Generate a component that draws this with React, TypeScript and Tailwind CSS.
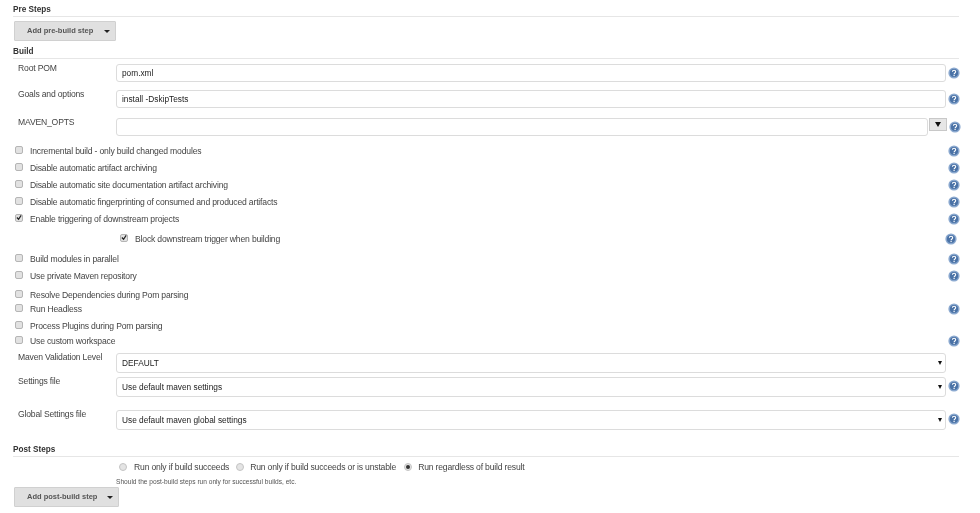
const labelText = 'text-[8.6px] tracking-[-0.18px] leading-none text-[#444]';

function HelpIcon() {
    return (
        <svg width="12" height="12" viewBox="0 0 12 12" className="shrink-0">
            <circle cx="6" cy="6" r="5.6" fill="#8aa8cf" />
            <circle cx="6" cy="6" r="4.1" fill="#4a72a6" />
            <path d="M4.4 4.8c0-2 3.3-2 3.3 0 0 1.2-1.6 1.2-1.6 2.4" fill="none" stroke="#fff" strokeWidth="1.1" />
            <rect x="5.5" y="7.9" width="1.2" height="1.2" fill="#fff" />
        </svg>
    );
}

function Checkbox({ checked }: { checked?: boolean }) {
    return (
        <span className="mb-[2px] flex h-[8px] w-[8px] shrink-0 items-center justify-center rounded-[2px] border border-[#b5b5b5] bg-[#e2e2e2]">
            {checked && (
                <svg width="7" height="7" viewBox="0 0 7 7">
                    <path d="M1 3.5 L3 5.5 L6 1" fill="none" stroke="#222" strokeWidth="1.4" />
                </svg>
            )}
        </span>
    );
}

function Radio({ checked }: { checked?: boolean }) {
    return (
        <span className="mb-[2px] flex h-[8px] w-[8px] shrink-0 items-center justify-center rounded-full border border-[#c4c4c4] bg-[#e4e4e4]">
            {checked && <span className="h-[4px] w-[4px] rounded-full bg-[#333]" />}
        </span>
    );
}

function Section({ title, height }: { title: string; height: string }) {
    return (
        <div className={`flex items-end border-b border-[#e6e6e6] pb-[2px] text-[8.2px] leading-none font-bold text-[#333] ${height}`}>
            {title}
        </div>
    );
}

function StepButton({ label, width }: { label: string; width: string }) {
    return (
        <div className={`ml-px flex h-[20px] items-center rounded-[1px] border border-[#d0d0d0] bg-[#e0e0e0] pl-[12px] text-[7.5px] font-bold whitespace-nowrap text-[#555] ${width}`}>
            <span className="flex-1">{label}</span>
            <span className="mr-[5px] h-0 w-0 border-x-[3px] border-t-[3px] border-x-transparent border-t-[#222]" />
        </div>
    );
}

function CheckRow({ label, height, checked, help = true, indent }: { label: string; height: string; checked?: boolean; help?: boolean; indent?: boolean }) {
    return (
        <div className={`flex items-center ${height}`}>
            <div className={indent ? 'w-[107px] shrink-0' : 'w-[2px] shrink-0'} />
            <Checkbox checked={checked} />
            <span className={`ml-[7px] flex-1 pt-[2px] ${labelText}`}>{label}</span>
            {help && (
                <div className={indent ? 'mr-[2px]' : '-mr-px'}>
                    <HelpIcon />
                </div>
            )}
        </div>
    );
}

function FieldRow({ label, value, height, fieldHeight, select, help = true }: { label: string; value: string; height: string; fieldHeight: string; select?: boolean; help?: boolean }) {
    return (
        <div className={`flex items-start ${height}`}>
            <span className={`ml-[5px] w-[98px] shrink-0 ${labelText}`}>{label}</span>
            <div className={`flex w-[830px] shrink-0 items-center justify-between rounded-[3px] border border-[#dcdcdc] bg-white pl-[5px] pr-[3px] text-[8.3px] text-[#222] ${fieldHeight}`}>
                <span>{value}</span>
                {select && <span className="h-0 w-0 border-x-[2.5px] border-t-[4px] border-x-transparent border-t-[#111]" />}
            </div>
            {help && (
                <div className="ml-[2px] mt-[3px]">
                    <HelpIcon />
                </div>
            )}
        </div>
    );
}

function MavenOptsRow() {
    return (
        <div className="flex h-[24px] items-start">
            <span className={`ml-[5px] w-[98px] shrink-0 ${labelText}`}>MAVEN_OPTS</span>
            <div className="h-[18px] w-[812px] shrink-0 rounded-[3px] border border-[#dcdcdc] bg-white" />
            <div className="ml-px flex h-[13px] w-[18px] shrink-0 items-center justify-center border border-[#c8c8c8] bg-[#e6e6e6]">
                <span className="h-0 w-0 border-x-[3px] border-t-[5px] border-x-transparent border-t-[#111]" />
            </div>
            <div className="ml-[2px] mt-[3px]">
                <HelpIcon />
            </div>
        </div>
    );
}

export default function App() {
    return (
        <div className="h-[513px] w-[980px] overflow-hidden bg-white pl-[13px] pr-[20px] font-['Liberation_Sans',Arial,sans-serif] blur-[0.35px]">
            <div className="w-[946px]">
                <Section title="Pre Steps" height="h-[17px]" />
                <div className="pt-[4px]">
                    <StepButton label="Add pre-build step" width="w-[102px]" />
                </div>
                <Section title="Build" height="h-[17px] mt-[1px]" />
                <div className="pt-[5px]">
                    <FieldRow label="Root POM" value="pom.xml" height="h-[26px]" fieldHeight="h-[18px]" />
                    <FieldRow label="Goals and options" value="install -DskipTests" height="h-[28px]" fieldHeight="h-[18px]" />
                    <MavenOptsRow />
                </div>
                <CheckRow label="Incremental build - only build changed modules" height="h-[17px]" />
                <CheckRow label="Disable automatic artifact archiving" height="h-[17px]" />
                <CheckRow label="Disable automatic site documentation artifact archiving" height="h-[17px]" />
                <CheckRow label="Disable automatic fingerprinting of consumed and produced artifacts" height="h-[17px]" />
                <CheckRow label="Enable triggering of downstream projects" height="h-[17px]" checked />
                <CheckRow label="Block downstream trigger when building" height="h-[23px]" checked indent />
                <CheckRow label="Build modules in parallel" height="h-[17px]" />
                <CheckRow label="Use private Maven repository" height="h-[17px]" />
                <CheckRow label="Resolve Dependencies during Pom parsing" height="h-[15px] mt-[3px]" help={false} />
                <CheckRow label="Run Headless" height="h-[13px]" />
                <CheckRow label="Process Plugins during Pom parsing" height="h-[15px] mt-[3px]" help={false} />
                <CheckRow label="Use custom workspace" height="h-[15px]" />
                <div className="pt-[5px]">
                    <FieldRow label="Maven Validation Level" value="DEFAULT" height="h-[24px]" fieldHeight="h-[20px]" select help={false} />
                    <FieldRow label="Settings file" value="Use default maven settings" height="h-[33px]" fieldHeight="h-[20px]" select />
                    <FieldRow label="Global Settings file" value="Use default maven global settings" height="h-[25px]" fieldHeight="h-[20px]" select />
                </div>
                <Section title="Post Steps" height="h-[18px] mt-[4px]" />
                <div className={`flex h-[21px] items-center pl-[106px] ${labelText}`}>
                    <Radio />
                    <span className="ml-[7px]">Run only if build succeeds</span>
                    <span className="ml-[7px]"><Radio /></span>
                    <span className="ml-[6px]">Run only if build succeeds or is unstable</span>
                    <span className="ml-[8px]"><Radio checked /></span>
                    <span className="ml-[6px]">Run regardless of build result</span>
                </div>
                <div className="h-[9px] pl-[103px] text-[6.6px] leading-[7px] text-[#555]">
                    Should the post-build steps run only for successful builds, etc.
                </div>
                <StepButton label="Add post-build step" width="w-[105px]" />
            </div>
        </div>
    );
}
